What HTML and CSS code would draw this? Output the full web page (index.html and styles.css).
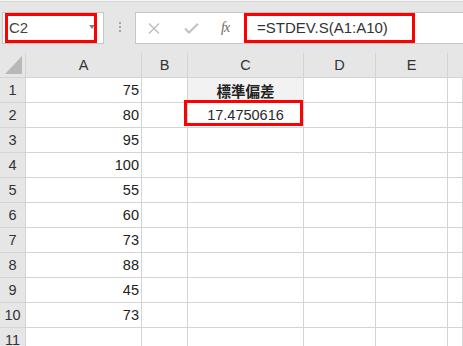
FILE: index.html
```html
<!DOCTYPE html>
<html lang="ja">
<head>
<meta charset="utf-8">
<title>STDEV.S</title>
<link rel="stylesheet" href="styles.css">
</head>
<body>
<div class="toolbar">
  <div class="namebox"><span class="ref">C2</span><span class="arrow"></span></div>
  <div class="grip"><i></i><i></i><i></i></div>
  <div class="fbar">
    <svg class="ico-x" width="12" height="11" viewBox="0 0 12 11"><path d="M1 0.5L11 10.5M11 0.5L1 10.5" stroke="#bdbdbd" stroke-width="1.4" fill="none"/></svg>
    <svg class="ico-check" width="15" height="11" viewBox="0 0 15 11"><path d="M1 5.5L5 9.5L14 0.8" stroke="#c2c2c2" stroke-width="2.2" fill="none"/></svg>
    <span class="fx">fx</span>
    <span class="formula">=STDEV.S(A1:A10)</span>
  </div>
  <div class="mark mark-name"></div>
  <div class="mark mark-formula"></div>
</div>
<div class="sheet">
  <div class="corner"><div class="tri"></div></div>
  <div class="ch">A</div><div class="ch">B</div><div class="ch">C</div><div class="ch">D</div><div class="ch">E</div><div class="ch last"></div>

  <div class="rh">1</div><div class="c a num">75</div><div class="c bb"></div><div class="c cc jp">標準偏差</div><div class="c"></div><div class="c"></div><div class="c"></div>
  <div class="rh">2</div><div class="c a num">80</div><div class="c bb"></div><div class="c cv">17.4750616</div><div class="c"></div><div class="c"></div><div class="c"></div>
  <div class="rh">3</div><div class="c a num">95</div><div class="c"></div><div class="c"></div><div class="c"></div><div class="c"></div><div class="c"></div>
  <div class="rh">4</div><div class="c a num">100</div><div class="c"></div><div class="c"></div><div class="c"></div><div class="c"></div><div class="c"></div>
  <div class="rh">5</div><div class="c a num">55</div><div class="c"></div><div class="c"></div><div class="c"></div><div class="c"></div><div class="c"></div>
  <div class="rh">6</div><div class="c a num">60</div><div class="c"></div><div class="c"></div><div class="c"></div><div class="c"></div><div class="c"></div>
  <div class="rh">7</div><div class="c a num">73</div><div class="c"></div><div class="c"></div><div class="c"></div><div class="c"></div><div class="c"></div>
  <div class="rh">8</div><div class="c a num">88</div><div class="c"></div><div class="c"></div><div class="c"></div><div class="c"></div><div class="c"></div>
  <div class="rh">9</div><div class="c a num">45</div><div class="c"></div><div class="c"></div><div class="c"></div><div class="c"></div><div class="c"></div>
  <div class="rh">10</div><div class="c a num">73</div><div class="c"></div><div class="c"></div><div class="c"></div><div class="c"></div><div class="c"></div>
  <div class="rh">11</div><div class="c"></div><div class="c"></div><div class="c"></div><div class="c"></div><div class="c"></div><div class="c"></div>

  <div class="mark mark-cell"></div>
</div>
</body>
</html>
```

FILE: styles.css
```css
html, body {
  margin: 0;
  padding: 0;
  overflow: hidden;
  background: #ffffff;
}
body {
  width: 463px;
  height: 346px;
  font-family: "Liberation Sans", Arial, sans-serif;
  color: #222;
}

/* ---------- formula bar ---------- */
.toolbar {
  position: relative;
  height: 53px;
  box-sizing: border-box;
  padding-top: 12px;
  display: flex;
  align-items: flex-start;
  background: linear-gradient(#f7f7f7 0, #f7f7f7 1px, #d6d6d6 1px, #d6d6d6 2px, #e6e6e6 2px);
}
.namebox {
  margin-left: 2px;
  width: 102px;
  height: 32px;
  box-sizing: border-box;
  border: 1px solid #c6c6c6;
  background: #fff;
  display: flex;
  align-items: center;
  padding-left: 6px;
}
.ref {
  font-size: 15px;
  color: #444;
  line-height: 30px;
}
.arrow {
  margin-left: auto;
  margin-right: 8px;
  margin-top: -2px;
  width: 0;
  height: 0;
  border-left: 3px solid transparent;
  border-right: 3px solid transparent;
  border-top: 4px solid #808080;
}
.grip {
  width: 31px;
  display: flex;
  flex-direction: column;
  align-items: center;
  gap: 2px;
  padding-top: 10px;
}
.grip i {
  display: block;
  width: 2px;
  height: 2px;
  background: #a5a5a5;
}
.fbar {
  flex: 1;
  margin-right: -2px;
  height: 32px;
  box-sizing: border-box;
  border: 1px solid #c6c6c6;
  background: #fff;
  display: flex;
  align-items: center;
  padding-left: 12px;
}
.ico-x { display: block; margin-top: 1px; }
.ico-check { display: block; margin-left: 24px; margin-top: 1px; }
.fx {
  margin-left: 22px;
  font-family: "Liberation Serif", "Times New Roman", serif;
  font-style: italic;
  font-size: 14px;
  color: #6a6a6a;
  letter-spacing: -1px;
  line-height: 30px;
}
.formula {
  margin-left: 28px;
  font-size: 15px;
  color: #333;
  line-height: 30px;
  white-space: nowrap;
}

/* annotation boxes */
.mark {
  position: absolute;
  box-sizing: border-box;
  border: 3px solid #ff0000;
  pointer-events: none;
}
.mark-name { left: 5px; top: 13px; width: 92px; height: 30px; }
.mark-formula { left: 244px; top: 13px; width: 171px; height: 30px; }
.mark-cell { left: 184px; top: 47px; width: 119px; height: 26px; }

/* ---------- sheet grid ---------- */
.sheet {
  position: relative;
  display: grid;
  grid-template-columns: 26px 116px 46px 116px 72px 72px 1fr;
  grid-auto-rows: 25px;
}
.sheet > div:not(.mark) {
  box-sizing: border-box;
  border-right: 1px solid #d4d4d4;
  border-bottom: 1px solid #d4d4d4;
  font-size: 14.5px;
  line-height: 23px;
  padding-top: 1px;
  white-space: nowrap;
  overflow: hidden;
}
.sheet > .corner {
  background: #e6e6e6;
  border-right: 1px solid #b4b4b4;
  border-bottom: 1px solid #a8a8a8;
  display: flex;
  justify-content: flex-end;
  align-items: flex-end;
  padding: 0;
}
.tri {
  width: 17px;
  height: 18px;
  margin: 0 3px 3px 0;
  background: #b8b8b8;
  clip-path: polygon(100% 0, 100% 100%, 0 100%);
}
.sheet > .ch {
  background: #e6e6e6;
  border-right: 1px solid #c2c2c2;
  border-bottom: 1px solid #a8a8a8;
  text-align: center;
  color: #333;
}
.sheet > .ch.last { border-right: none; }
.sheet > .rh {
  background: #e6e6e6;
  border-right: 1px solid #a8a8a8;
  border-bottom: 1px solid #c8c8c8;
  text-align: center;
  color: #333;
}
.sheet > .a {
  border-right: 1px solid #000;
  border-bottom: 1px solid #000;
}
.sheet > .bb { border-right: 1px solid #000; }
.sheet > .cc,
.sheet > .cv {
  border-right: 1px solid #000;
  border-bottom: 1px solid #000;
  text-align: center;
}
.sheet > .cc { background: #f2f2f2; }
.sheet > .jp {
  font-family: "Noto Sans CJK JP", "Liberation Sans", sans-serif;
  font-weight: bold;
  font-size: 15px;
  line-height: 21px;
  padding-top: 1px;
  color: #222;
}
.num {
  text-align: right;
  padding-right: 2px;
  color: #222;
}
.cv { color: #2a2a2a; }
```
